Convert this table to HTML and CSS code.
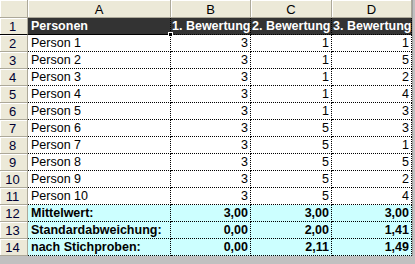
FILE: index.html
```html
<!DOCTYPE html>
<html>
<head>
<meta charset="utf-8">
<link rel="stylesheet" href="styles.css">
</head>
<body>
<div class="sheet">
  <div class="corner"></div>
  <div class="colhead">A</div>
  <div class="colhead">B</div>
  <div class="colhead">C</div>
  <div class="colhead">D</div>

  <div class="rowhead sel">1</div>
  <div class="cell title sel-cell">Personen<span class="handle"></span></div>
  <div class="cell title">1. Bewertung</div>
  <div class="cell title">2. Bewertung</div>
  <div class="cell title">3. Bewertung</div>

  <div class="rowhead">2</div><div class="cell">Person 1</div><div class="cell num">3</div><div class="cell num">1</div><div class="cell num">1</div>
  <div class="rowhead">3</div><div class="cell">Person 2</div><div class="cell num">3</div><div class="cell num">1</div><div class="cell num">5</div>
  <div class="rowhead">4</div><div class="cell">Person 3</div><div class="cell num">3</div><div class="cell num">1</div><div class="cell num">2</div>
  <div class="rowhead">5</div><div class="cell">Person 4</div><div class="cell num">3</div><div class="cell num">1</div><div class="cell num">4</div>
  <div class="rowhead">6</div><div class="cell">Person 5</div><div class="cell num">3</div><div class="cell num">1</div><div class="cell num">3</div>
  <div class="rowhead">7</div><div class="cell">Person 6</div><div class="cell num">3</div><div class="cell num">5</div><div class="cell num">3</div>
  <div class="rowhead">8</div><div class="cell">Person 7</div><div class="cell num">3</div><div class="cell num">5</div><div class="cell num">1</div>
  <div class="rowhead">9</div><div class="cell">Person 8</div><div class="cell num">3</div><div class="cell num">5</div><div class="cell num">5</div>
  <div class="rowhead">10</div><div class="cell">Person 9</div><div class="cell num">3</div><div class="cell num">5</div><div class="cell num">2</div>
  <div class="rowhead">11</div><div class="cell">Person 10</div><div class="cell num">3</div><div class="cell num">5</div><div class="cell num">4</div>

  <div class="rowhead">12</div><div class="cell stat">Mittelwert:</div><div class="cell stat num">3,00</div><div class="cell stat num">3,00</div><div class="cell stat num">3,00</div>
  <div class="rowhead">13</div><div class="cell stat">Standardabweichung:</div><div class="cell stat num">0,00</div><div class="cell stat num">2,00</div><div class="cell stat num">1,41</div>
  <div class="rowhead">14</div><div class="cell stat">nach Stichproben:</div><div class="cell stat num">0,00</div><div class="cell stat num">2,11</div><div class="cell stat num">1,49</div>
</div>
</body>
</html>
```

FILE: styles.css
```css
html, body {
  margin: 0;
  padding: 0;
}
body {
  background: #c0c0c0;
  width: 415px;
  height: 264px;
  overflow: hidden;
  font-family: "Liberation Sans", Arial, sans-serif;
  font-size: 12px;
  color: #000;
}
.sheet {
  display: grid;
  grid-template-columns: 28px 143px 80px 81px 80px;
  grid-template-rows: 18px repeat(14, 17px);
  width: 412px;
  background: #fff;
  border-right: 1px solid #a0a0a0;
}
.corner, .colhead, .rowhead {
  background: #ece9d8;
  box-sizing: border-box;
  border-right: 1px solid #aca899;
  border-bottom: 1px solid #aca899;
  box-shadow: inset 1px 1px 0 #fff;
  color: #000;
}
.colhead {
  display: flex;
  align-items: center;
  justify-content: center;
  font-size: 13px;
  padding-top: 1px;
}
.rowhead {
  display: flex;
  align-items: center;
  justify-content: center;
  font-size: 13px;
  padding-right: 2px;
  color: #000033;
}
.rowhead.sel {
  border-bottom: 1px solid #000;
}
.cell {
  box-sizing: border-box;
  border-right: 1px dotted #000;
  border-bottom: 1px dotted #000;
  padding: 0 2px 0 3px;
  display: flex;
  align-items: center;
  white-space: nowrap;
  overflow: hidden;
  line-height: 16px;
  font-size: 12.5px;
}
.num {
  justify-content: flex-end;
}
.title {
  background: #333333;
  color: #fff;
  font-weight: bold;
  padding-left: 1px;
  padding-right: 0;
}
.sel-cell {
  position: relative;
  overflow: visible;
  padding-left: 3px;
  border-bottom: 1px solid #000;
}
.handle {
  position: absolute;
  right: -3px;
  bottom: -3px;
  width: 5px;
  height: 5px;
  background: #000;
  border: 1px solid #fff;
  box-sizing: border-box;
  z-index: 2;
}
.stat {
  background: #ccffff;
  font-weight: bold;
}
```
